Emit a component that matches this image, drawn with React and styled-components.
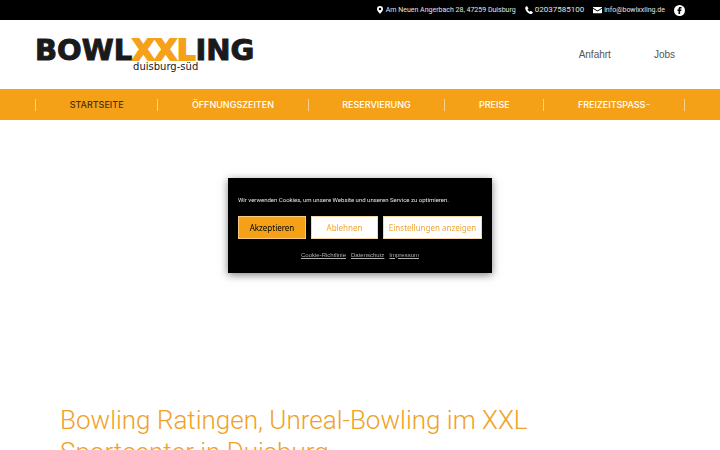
import React from 'react';
import styled, { createGlobalStyle } from 'styled-components';

const menuItems = [
  { label: 'STARTSEITE', active: true },
  { label: 'ÖFFNUNGSZEITEN' },
  { label: 'RESERVIERUNG' },
  { label: 'PREISE' },
  { label: 'FREIZEITSPASS', sub: true },
];

const PinIcon = () => (
  <svg width="8" height="8" viewBox="0 0 16 16" aria-hidden="true">
    <path
      fill="#fff"
      fillRule="evenodd"
      d="M8 0a6 6 0 0 0-6 6c0 4 4 7 6 10 2-3 6-6 6-10a6 6 0 0 0-6-6zm0 3.500a2.500 2.500 0 1 1 0 5 2.500 2.500 0 0 1 0-5z"
    />
  </svg>
);

const PhoneIcon = () => (
  <svg width="8" height="8" viewBox="0 0 16 16" aria-hidden="true">
    <path
      fill="#fff"
      d="M1 2 4 0l3 5-2 2c1 2 2.500 3.500 4.500 4.500l2-2 4.500 3-2 3c-1 .6-3 .5-5 0C4.500 13.500 1 9 .5 5 .4 4 .5 3 1 2z"
    />
  </svg>
);

const MailIcon = () => (
  <svg width="9" height="8" viewBox="0 0 18 16" aria-hidden="true">
    <path fill="#fff" d="M0 2h18v1.500L9 9 0 3.500zM0 5.500l9 5.500 9-5.500v9H0z" />
  </svg>
);

const FacebookIcon = () => (
  <svg width="11" height="11" viewBox="0 0 22 22" aria-hidden="true">
    <circle cx="11" cy="11" r="11" fill="#fff" />
    <path fill="#000" d="M9 18v-6H7V9h2V7.500C9 5 10.200 4 12.500 4H15v3h-1.500c-.9 0-1.200.3-1.200 1V9H15l-.4 3h-2.300v6z" />
  </svg>
);

const App = () => {
  return (
    <>
      <GlobalStyle />
      <TopBar>
        <Contact>
          <PinIcon />
          Am Neuen Angerbach 28, 47259 Duisburg
        </Contact>
        <Contact $large>
          <PhoneIcon />
          02037585100
        </Contact>
        <Contact>
          <MailIcon />
          info@bowlxxling.de
        </Contact>
        <Social href="#facebook" aria-label="Facebook">
          <FacebookIcon />
        </Social>
      </TopBar>
      <Header>
        <Logo href="#start">
          <LogoName>
            BOWL<LogoAccent>XXL</LogoAccent>ING
          </LogoName>
          <LogoCity>duisburg-süd</LogoCity>
        </Logo>
        <HeaderLinks>
          <HeaderLink href="#anfahrt">Anfahrt</HeaderLink>
          <HeaderLink href="#jobs">Jobs</HeaderLink>
        </HeaderLinks>
      </Header>
      <NavBar>
        <Menu>
          {menuItems.map((item) => (
            <MenuItem key={item.label}>
              <MenuLink href="#menu" $active={item.active}>
                {item.label}
                {item.sub && <Caret />}
              </MenuLink>
            </MenuItem>
          ))}
        </Menu>
      </NavBar>
      <Main>
        <Title>Bowling Ratingen, Unreal-Bowling im XXL Sportcenter in Duisburg</Title>
      </Main>
      <Overlay>
        <Banner role="dialog" aria-label="Cookies">
          <Message>Wir verwenden Cookies, um unsere Website und unseren Service zu optimieren.</Message>
          <Buttons>
            <Button type="button" $primary>
              Akzeptieren
            </Button>
            <Button type="button">Ablehnen</Button>
            <Button type="button">Einstellungen anzeigen</Button>
          </Buttons>
          <Legal>
            <LegalLink href="#cookies">Cookie-Richtlinie</LegalLink>
            <LegalLink href="#datenschutz">Datenschutz</LegalLink>
            <LegalLink href="#impressum">Impressum</LegalLink>
          </Legal>
        </Banner>
      </Overlay>
    </>
  );
};
export default App;

// STYLE
const GlobalStyle = createGlobalStyle`
  * {
    box-sizing: border-box;
  }
  html {
    scrollbar-width: none;
  }
  body {
    margin: 0;
    background-color: #fff;
    font-family: Roboto, "Liberation Sans", sans-serif;
  }
  a {
    color: inherit;
    text-decoration: none;
  }
  svg {
    display: block;
    flex: none;
  }
`;
const TopBar = styled.div`
  display: flex;
  justify-content: flex-end;
  align-items: center;
  gap: 9px;
  height: 20px;
  padding: 0 35px;
  background-color: #000;
  color: #e4e4e4;
`;
const Contact = styled.span`
  display: flex;
  align-items: center;
  gap: 2px;
  font-size: ${(props) => (props.$large ? '8px' : '7px')};
  line-height: 10px;
  white-space: nowrap;
`;
const Social = styled.a`
  display: block;
`;
const Header = styled.header`
  display: flex;
  justify-content: space-between;
  align-items: center;
  height: 69px;
  padding: 0 35px;
`;
const Logo = styled.a`
  display: flex;
  flex-direction: column;
  align-items: center;
  color: #1a1a1a;
`;
const LogoName = styled.span`
  font-family: "DejaVu Sans", sans-serif;
  font-size: 29px;
  font-weight: bold;
  line-height: 24px;
  -webkit-text-stroke: 1px #1a1a1a;
`;
const LogoAccent = styled.span`
  color: #f5a11a;
  -webkit-text-stroke: 2px #f5a11a;
`;
const LogoCity = styled.span`
  padding-left: 42px;
  font-family: "DejaVu Sans", sans-serif;
  font-size: 10px;
  line-height: 10px;
`;
const HeaderLinks = styled.nav`
  display: flex;
  gap: 43px;
  padding-right: 10px;
`;
const HeaderLink = styled.a`
  color: #555;
  font-family: "Liberation Sans", sans-serif;
  font-size: 10px;
`;
const NavBar = styled.nav`
  padding: 0 35px;
  background-color: #f4a118;
`;
const Menu = styled.ul`
  display: flex;
  align-items: center;
  height: 31px;
  margin: 0;
  padding: 0;
  list-style: none;
`;
const MenuItem = styled.li`
  display: flex;
  flex: 1 1 auto;
  justify-content: center;
  align-items: center;
  height: 12px;
  border-left: 1px solid #fad08a;
  &:last-child {
    border-right: 1px solid #fad08a;
  }
`;
const MenuLink = styled.a`
  display: flex;
  align-items: center;
  gap: 1px;
  color: ${(props) => (props.$active ? '#4a300a' : '#fff')};
  font-family: Inter, sans-serif;
  font-size: 9px;
  font-weight: 500;
`;
const Caret = styled.span`
  width: 4px;
  height: 1px;
  background-color: #fbd9a0;
`;
const Main = styled.main`
  padding: 284px 60px 0;
`;
const Title = styled.h1`
  margin: 0;
  color: #efa128;
  font-size: 26px;
  font-weight: 300;
  line-height: 32px;
`;
const Overlay = styled.div`
  display: flex;
  justify-content: center;
  align-items: center;
  position: fixed;
  inset: 0;
  pointer-events: none;
`;
const Banner = styled.div`
  padding: 17px 10px 13px;
  background-color: #000;
  box-shadow: 0 2px 8px rgba(0, 0, 0, 0.5);
  color: #e4e4e4;
  font-size: 6px;
  line-height: 9px;
  pointer-events: auto;
`;
const Message = styled.p`
  margin: 0 0 12px;
`;
const Buttons = styled.div`
  display: grid;
  grid-template-columns: 68px 67px 99px;
  gap: 5px;
`;
const Button = styled.button`
  height: 23px;
  padding: 0;
  border: 1px solid ${(props) => (props.$primary ? '#f9c97c' : '#f6d6a4')};
  background-color: ${(props) => (props.$primary ? '#f4a118' : '#fff')};
  color: ${(props) => (props.$primary ? '#000' : '#efa63a')};
  font-family: "Noto Sans", sans-serif;
  font-size: 8px;
  white-space: nowrap;
`;
const Legal = styled.div`
  display: flex;
  justify-content: center;
  gap: 5px;
  margin-top: 12px;
  font-family: "Liberation Sans", sans-serif;
`;
const LegalLink = styled.a`
  color: #b0b0b0;
  text-decoration: underline;
`;
